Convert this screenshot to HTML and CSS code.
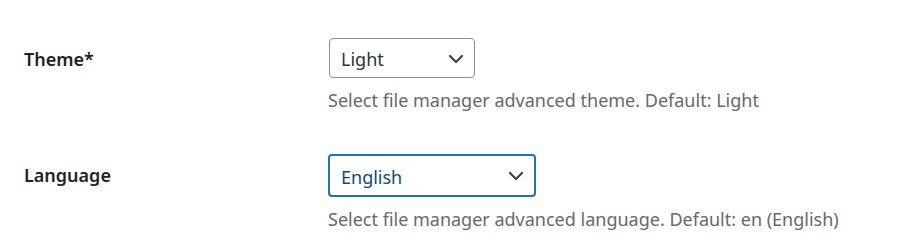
FILE: index.html
```html
<!DOCTYPE html>
<html lang="en">
<head>
    <meta charset="UTF-8">
    <meta name="viewport" content="width=device-width, initial-scale=1.0">
    <title>File Manager Advanced Settings</title>
    <link rel="stylesheet" href="styles.css">
</head>
<body>
    <div class="form-table">
        <div class="form-row">
            <label class="row-label" for="fmaTheme">Theme*</label>
            <div class="row-field">
                <div class="select-wrap select-theme">
                    <select id="fmaTheme">
                        <option>Light</option>
                        <option>Dark</option>
                    </select>
                    <svg class="chevron" width="16" height="10" viewBox="0 0 16 10"><path d="M2 2 L8 8 L14 2" fill="none" stroke="#3c434a" stroke-width="2.2" stroke-linecap="round" stroke-linejoin="round"/></svg>
                </div>
                <p class="description">Select file manager advanced theme. Default: Light</p>
            </div>
        </div>

        <div class="form-row">
            <label class="row-label" for="fmaLang">Language</label>
            <div class="row-field">
                <div class="select-wrap select-lang">
                    <select id="fmaLang" class="is-focused">
                        <option>English</option>
                        <option>Deutsch</option>
                    </select>
                    <svg class="chevron" width="16" height="10" viewBox="0 0 16 10"><path d="M2 2 L8 8 L14 2" fill="none" stroke="#3c434a" stroke-width="2.2" stroke-linecap="round" stroke-linejoin="round"/></svg>
                </div>
                <p class="description">Select file manager advanced language. Default: en (English)</p>
            </div>
        </div>
    </div>
</body>
</html>
```

FILE: styles.css
```css
:root {
    --text-color: #1d2327;
    --muted-color: #646970;
    --border-color: #8c8f94;
    --focus-color: #2271b1;
}

* {
    margin: 0;
    padding: 0;
    box-sizing: border-box;
}

body {
    background: #fff;
    color: var(--text-color);
    font-family: "Noto Sans", "Open Sans", sans-serif;
    font-size: 18px;
}

.form-table {
    padding: 38px 0 0 24px;
    display: flex;
    flex-direction: column;
    gap: 42px;
}

.form-row {
    display: grid;
    grid-template-columns: 304px 1fr;
}

.row-label {
    font-weight: 600;
    padding-top: 8px;
    line-height: 26px;
}

.select-wrap {
    position: relative;
}

.select-wrap select {
    appearance: none;
    -webkit-appearance: none;
    display: block;
    font: inherit;
    color: #2c3338;
    background: #fff;
    border: 1px solid var(--border-color);
    border-radius: 4px;
    padding: 2px 40px 0 11px;
    outline: none;
}

.select-theme select {
    width: 146px;
    height: 40px;
    margin-left: 1px;
}

.select-lang select {
    width: 208px;
    height: 43px;
}

.select-wrap select.is-focused {
    border: 2px solid var(--focus-color);
    color: #0a4b78;
    padding-left: 11px;
}

.chevron {
    position: absolute;
    pointer-events: none;
}

.select-theme .chevron {
    left: 120px;
    top: 16px;
}

.select-lang .chevron {
    left: 180px;
    top: 17px;
}

.description {
    color: var(--muted-color);
    margin-top: 10px;
    line-height: 24px;
}
```
